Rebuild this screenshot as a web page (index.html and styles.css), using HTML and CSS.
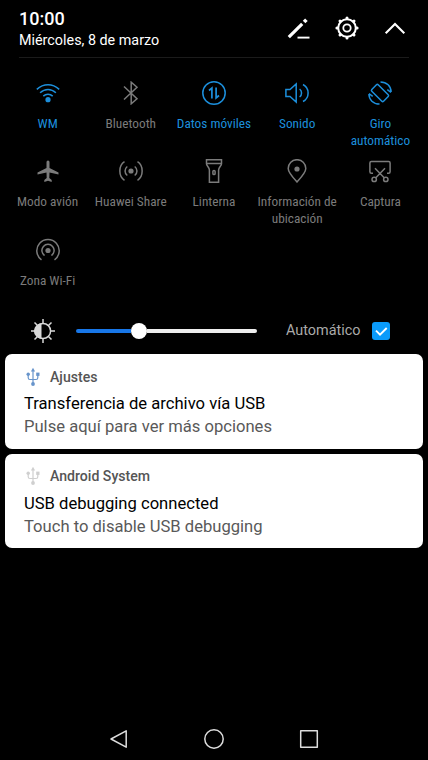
FILE: index.html
```html
<!DOCTYPE html>
<html lang="es">
<head>
<meta charset="utf-8">
<title>Panel</title>
<link rel="stylesheet" href="styles.css">
</head>
<body>
<svg class="defs" width="0" height="0">
  <symbol id="usb" viewBox="0 0 14 20">
    <path d="M7 3v14M2.200 7.500v3.200c0 1.200.6 1.800 1.800 1.800h6c1.200 0 1.800-.6 1.800-1.800V7.500" fill="none" stroke="currentColor" stroke-width="1.200"/>
    <path d="M7 .8 9.100 4.500H4.900z" fill="currentColor"/>
    <circle cx="2.200" cy="7.300" r="1.700" fill="currentColor"/>
    <path d="M10.200 5.600h3.300v3.300h-3.300z" fill="currentColor"/>
    <circle cx="7" cy="17" r="1.900" fill="currentColor"/>
  </symbol>
</svg>
<header class="header">
  <div>
    <div class="time">10:00</div>
    <div class="date">Miércoles, 8 de marzo</div>
  </div>
  <div class="actions">
    <svg class="icon" viewBox="0 0 24 24"><path d="M1.800 21.200 15.200 7.800" stroke-width="3.200"/><path d="m17.100 6 2.300-2.300" stroke-width="3.600"/><path d="M10.500 21.600H22.500" stroke-width="1.900"/></svg>
    <svg class="icon" viewBox="0 0 24 24"><circle cx="12" cy="12" r="8.800" stroke-width="2"/><circle cx="12" cy="12" r="3.700" stroke-width="1.800"/><path stroke-width="3" stroke-linecap="round" d="M12 1.900v.7M12 21.400v.7M1.900 12h.7M21.400 12h.7M5 5l.4.4M18.600 18.600l.4.4M19 5l-.4.4M5.400 18.600l-.4.4"/></svg>
    <svg class="icon" viewBox="0 0 24 24"><path d="m2.700 17.300 9.300-9.300 9.300 9.300" stroke-width="2.100"/></svg>
  </div>
</header>
<main>
  <section class="tiles">
    <div class="tile on"><svg class="icon" viewBox="0 0 24 24"><path d="M.8 8.400C7.500 2.300 16.500 2.300 23.200 8.400M4.100 11.800c4.700-4.400 11.100-4.400 15.800 0M7.300 15.100c2.700-2.600 6.700-2.600 9.400 0"/><circle class="fill" cx="12" cy="18.700" r="2.600"/></svg><span>WM</span></div>
    <div class="tile"><svg class="icon" viewBox="0 0 24 24"><path d="m5 5.500 13 12.300-5.800 5V1.200l5.800 5L5 18.500"/></svg><span>Bluetooth</span></div>
    <div class="tile on"><svg class="icon" viewBox="0 0 24 24"><circle cx="12" cy="12" r="11.200"/><path d="M7 9.500 9.900 7v10.500M14.100 6.500V17l2.900-2.500" stroke-width="1.700"/></svg><span>Datos móviles</span></div>
    <div class="tile on"><svg class="icon" viewBox="0 0 24 24"><path d="M.9 8.500H5l6.200-5.600v18.200L5 15.500H.9zM14.600 8c2.600 1.800 2.600 6.200 0 8M18 3.500c6.800 3.500 6.800 13.500 0 17"/></svg><span>Sonido</span></div>
    <div class="tile on"><svg class="icon" viewBox="0 0 24 24"><rect x="7.500" y="3.700" width="9" height="16.600" rx="1.200" transform="rotate(-45 12 12)"/><path d="M12.500.9c6.300 0 10.500 4.400 10.600 10M19.300 8.700l3.700 2.600M11.500 23.100C5.200 23.100 1 18.700.9 13.100M4.700 15.300 1 12.700"/></svg><span>Giro automático</span></div>
    <div class="tile"><svg class="icon" viewBox="0 0 24 24"><path class="fill" d="M12 1.400c1 0 1.500.9 1.500 2.200v5.500l9 4.300v2.100l-9-1.900-.2 5.500 2.400 2v1.800L12 21.800l-3.700 1.100v-1.800l2.400-2-.2-5.500-9 1.900v-2.100l9-4.300V3.600c0-1.300.5-2.200 1.500-2.200z"/></svg><span>Modo avión</span></div>
    <div class="tile"><svg class="icon" viewBox="0 0 24 24"><circle class="fill" cx="12" cy="12" r="2.600"/><path d="M8.300 7.500c-3 2.200-3 6.800 0 9M15.700 7.500c3 2.200 3 6.800 0 9M5.500 2.700c-6.200 4-6.200 14.600 0 18.600M18.500 2.700c6.200 4 6.200 14.600 0 18.600"/></svg><span>Huawei Share</span></div>
    <div class="tile"><svg class="icon" viewBox="0 0 24 24"><path d="M4.500.8h15v4c0 2.200-2.900 3.400-2.900 6.200v12.200H7.400V11c0-2.800-2.900-4-2.900-6.200zM4.500 4.600h15"/><rect x="10.900" y="11.500" width="2.200" height="4" rx="1.100"/></svg><span>Linterna</span></div>
    <div class="tile"><svg class="icon" viewBox="0 0 24 24"><path d="M12 23C7.500 18 3.200 13.500 3.200 9.500a8.800 8.800 0 0 1 17.600 0c0 4-4.300 8.500-8.800 13.500z"/><circle class="fill" cx="12" cy="10" r="2.600"/></svg><span>Información de ubicación</span></div>
    <div class="tile"><svg class="icon" viewBox="0 0 24 24"><path d="M5 14.200H3.400c-1 0-1.500-.5-1.500-1.500V3.900c0-1 .5-1.500 1.500-1.500h17.200c1 0 1.500.5 1.500 1.500v8.800c0 1-.5 1.500-1.500 1.500H19M7 9.300l9.200 9.500M17 9.300l-9.200 9.500"/><circle cx="6.200" cy="20.400" r="2.200"/><circle cx="17.800" cy="20.400" r="2.200"/></svg><span>Captura</span></div>
    <div class="tile"><svg class="icon" viewBox="0 0 24 24"><circle class="fill" cx="12" cy="12.500" r="2.600"/><path d="M8.600 17.500a6.100 6.100 0 1 1 6.800 0M5.500 21.800a11.200 11.200 0 1 1 13 0"/></svg><span>Zona Wi-Fi</span></div>
  </section>
  <section class="brightness">
    <svg class="icon" viewBox="0 0 24 24"><circle cx="12" cy="12" r="7.600"/><path class="fill" d="M10.500 4.400a7.600 7.600 0 0 0 0 15.200z"/><path d="M12 0v4M12 20v4M0 12h4M20 12h4M3.500 3.500l2.800 2.800M17.700 17.700l2.800 2.800M20.500 3.500l-2.800 2.800M6.300 17.700l-2.800 2.800"/></svg>
    <div class="slider"><div class="level"></div><div class="knob"></div><div class="rest"></div></div>
    <span class="auto">Automático</span>
    <svg class="check" viewBox="0 0 18 18"><rect width="18" height="18" rx="3" fill="#0a9bfb"/><path d="m4 8.700 4 4 6.700-6.700" fill="none" stroke="#fff" stroke-width="1.900"/></svg>
  </section>
  <section class="cards">
    <article class="card">
      <div class="app"><svg class="usb blue"><use href="#usb"/></svg><span>Ajustes</span></div>
      <div class="title">Transferencia de archivo vía USB</div>
      <div class="text">Pulse aquí para ver más opciones</div>
    </article>
    <article class="card">
      <div class="app"><svg class="usb"><use href="#usb"/></svg><span>Android System</span></div>
      <div class="title">USB debugging connected</div>
      <div class="text">Touch to disable USB debugging</div>
    </article>
  </section>
</main>
<nav class="nav">
  <svg viewBox="0 0 20 20"><path d="M17.200 1.800v16.400L2 10z"/></svg>
  <svg viewBox="0 0 20 20"><circle cx="10" cy="10" r="9.200"/></svg>
  <svg viewBox="0 0 20 20"><rect x="1.700" y="1.700" width="16.600" height="16.600"/></svg>
</nav>
</body>
</html>
```
FILE: styles.css
```css
* { box-sizing: border-box; }
body {
  margin: 0;
  height: 760px;
  background: #000;
  color: #fff;
  font-family: Roboto, sans-serif;
  display: flex;
  flex-direction: column;
  overflow: hidden;
}
.defs { position: absolute; }
svg { display: block; flex: none; }
.icon { width: 24px; height: 24px; fill: none; stroke: currentColor; stroke-width: 1.5; }
.icon .fill { fill: currentColor; stroke: none; }
.header {
  height: 58px;
  margin: 0 19px;
  padding-top: 8px;
  display: flex;
  justify-content: space-between;
  border-bottom: 1px solid #1b1b1b;
}
.time { font-size: 18px; line-height: 21px; font-weight: 500; }
.date { font-size: 14.35px; line-height: 24px; white-space: nowrap; }
.actions { display: flex; gap: 24px; padding: 8px 2px 0 0; }
.tiles {
  margin: 23px 6px 0;
  display: grid;
  grid-template-columns: repeat(5, 1fr);
  grid-auto-rows: 78.4px;
}
.tile { display: flex; flex-direction: column; align-items: center; color: #7b7b7b; }
.tile.on { color: #1c8fdc; }
.tile span {
  margin-top: 10px;
  width: 82px;
  text-align: center;
  font-family: "Roboto Condensed", Roboto, sans-serif;
  font-stretch: 75%;
  font-size: 13.3px;
  line-height: 17px;
}
.brightness { height: 29px; display: flex; align-items: center; padding-left: 31px; color: #d8d8d8; }
.slider { width: 181px; margin-left: 21px; display: flex; align-items: center; }
.level { width: 55px; height: 4px; background: #1877e8; border-radius: 2px 0 0 2px; }
.knob { width: 16px; height: 16px; border-radius: 50%; background: #fff; }
.rest { flex: 1; height: 4px; background: #eee; border-radius: 0 2px 2px 0; }
.auto { width: 75px; margin-left: 29px; font-size: 14.4px; white-space: nowrap; color: #aaa; }
.check { width: 18px; height: 18px; margin-left: 10.5px; }
.cards { display: grid; gap: 5px; padding: 0 5px; margin-top: 9px; }
.card { height: 94.5px; background: #fff; border-radius: 7px; padding: 11px 19px; color: #000; }
.app { display: flex; align-items: center; gap: 10px; height: 23px; margin-left: 2px; font-size: 14.1px; font-weight: 500; color: #555; }
.usb { width: 14px; height: 20px; color: #cfcfcf; }
.usb.blue { color: #6794cb; }
.title, .text { font-size: 16.6px; line-height: 23px; white-space: nowrap; }
.title { margin-top: 4px; }
.text { color: #595959; }
.nav { margin-top: auto; height: 43px; display: flex; justify-content: space-between; padding: 0 109px; }
.nav svg { width: 20px; height: 20px; margin-top: 12px; fill: none; stroke: #ddd; stroke-width: 1.5; stroke-linejoin: round; }
```
